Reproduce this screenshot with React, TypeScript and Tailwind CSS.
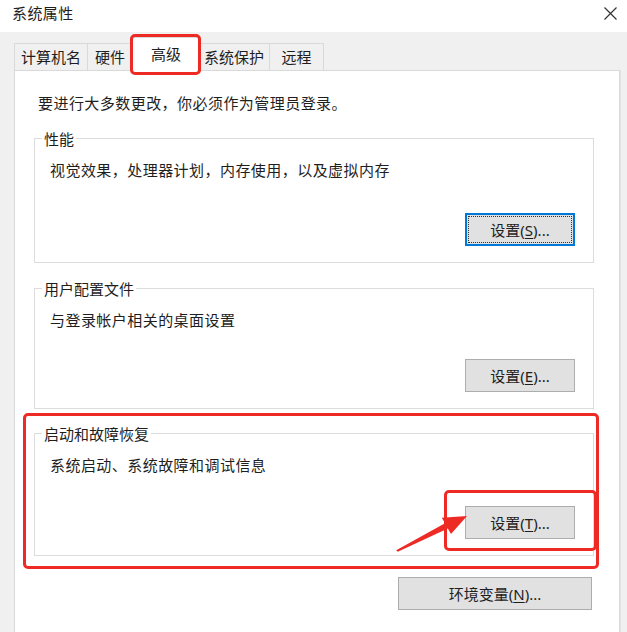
import type { ReactNode } from 'react';

const tabs = [
  { label: '计算机名', w: 'w-[74px]' },
  { label: '硬件', w: 'w-[46px]' },
  { label: '高级', w: 'w-[70px]', active: true },
  { label: '系统保护', w: 'w-[72px]' },
  { label: '远程', w: 'w-[55px]' },
];

function Btn({ text, hot, rest, focused, className = '', children }: {
  text: string; hot: string; rest: string; focused?: boolean; className?: string; children?: ReactNode;
}) {
  return (
    <div
      className={`relative flex h-[33px] items-center justify-center bg-[#e1e1e1] ${focused ? 'border-2 border-[#0078d7]' : 'border border-[#adadad]'} ${className}`}
    >
      {focused && <span className="absolute inset-[1px] border border-dotted border-[#333]" />}
      <span className="leading-[20px]">
        {text}(<span className="underline underline-offset-2">{hot}</span>){rest}
      </span>
      {children}
    </div>
  );
}

function Group({ title, desc, h, className = '', children, overlay }: {
  title: string; desc: string; h: string; className?: string; children: ReactNode; overlay?: ReactNode;
}) {
  return (
    <div className={`relative flex flex-col border border-[#dcdcdc] pb-[16px] pr-[18px] ${h} ${className}`}>
      <span className="-mt-[10px] ml-[7px] w-fit bg-white px-[2px] leading-[20px]">{title}</span>
      <p className="mt-[11px] pl-[15px] leading-[20px] tracking-[0.45px]">{desc}</p>
      <div className="mt-auto flex justify-end">{children}</div>
      {overlay}
    </div>
  );
}

export default function App() {
  return (
    <div className="relative h-[632px] w-[627px] overflow-hidden bg-[#f0f0f0] font-['Noto_Sans','Noto_Sans_CJK_SC',sans-serif] text-[15px] text-[#1e1e1e]">
      {/* title bar */}
      <div className="flex h-[32px] items-center justify-between bg-white pl-[12px] pr-[10px]">
        <span className="-mt-[7px] leading-[20px] tracking-[0.4px]">系统属性</span>
        <svg width="13" height="13" viewBox="0 0 13 13" className="-mt-[6px]">
          <path d="M0.5 0.5 L12.5 12.5 M12.5 0.5 L0.5 12.5" stroke="#333" strokeWidth="1.2" />
        </svg>
      </div>

      <div className="pl-[14px] pr-[7px] pt-[5px]">
        {/* tabs */}
        <div className="relative z-10 flex h-[33px] items-end">
          {tabs.map(t =>
            t.active ? (
              <div
                key={t.label}
                className={`relative -mx-[2px] -mb-px flex h-[34px] items-center justify-center border border-b-0 border-[#d9d9d9] bg-white ${t.w}`}
              >
                <span className="-mt-[1px] leading-[20px]">{t.label}</span>
                <span className="absolute -bottom-[4px] -left-[2px] -right-[1px] -top-[4px] rounded-[5px] border-[3px] border-[#ee2a24]" />
              </div>
            ) : (
              <div
                key={t.label}
                className={`-ml-px flex h-[27px] items-center justify-center border border-b-0 border-[#d9d9d9] bg-[#f0f0f0] first:ml-0 ${t.w}`}
              >
                <span className="leading-[20px]">{t.label}</span>
              </div>
            ),
          )}
        </div>

        {/* panel */}
        <div className="flex h-[600px] flex-col border border-[#d9d9d9] bg-white pl-[19px] pr-[25px] pt-[22px] shadow-[1px_0_0_#e3e3e3]">
          <p className="pl-[4px] leading-[20px] tracking-[0.45px]">要进行大多数更改，你必须作为管理员登录。</p>

          <Group title="性能" desc="视觉效果，处理器计划，内存使用，以及虚拟内存" h="h-[125px]" className="mt-[25px]">
            <Btn text="设置" hot="S" rest="..." focused className="w-[110px]" />
          </Group>

          <Group title="用户配置文件" desc="与登录帐户相关的桌面设置" h="h-[121px]" className="mt-[25px]">
            <Btn text="设置" hot="E" rest="..." className="w-[110px]" />
          </Group>

          <Group
            title="启动和故障恢复"
            desc="系统启动、系统故障和调试信息"
            h="h-[123px]"
            className="mt-[24px]"
            overlay={
              <span className="pointer-events-none absolute -bottom-[14px] -left-[12px] -right-[6px] -top-[21px] rounded-[5px] border-[3px] border-[#ee2a24]" />
            }
          >
            <Btn text="设置" hot="T" rest="..." className="w-[110px]">
              <span className="pointer-events-none absolute -bottom-[13px] -left-[22px] -right-[23px] -top-[17px] rounded-[5px] border-[3px] border-[#ee2a24]" />
            </Btn>
          </Group>

          <div className="mr-[2px] mt-[21px] flex justify-end">
            <Btn text="环境变量" hot="N" rest="..." className="w-[194px]" />
          </div>
        </div>
      </div>

      {/* annotation arrow */}
      <svg className="pointer-events-none absolute left-[390px] top-[505px]" width="85" height="55" viewBox="0 0 85 55">
        <polygon
          points="6.2,45.2 55,18.2 51.8,12.8 77,11 61,29 57.8,23.6 7.8,46.8"
          fill="#ee2a24"
        />
      </svg>
    </div>
  );
}
